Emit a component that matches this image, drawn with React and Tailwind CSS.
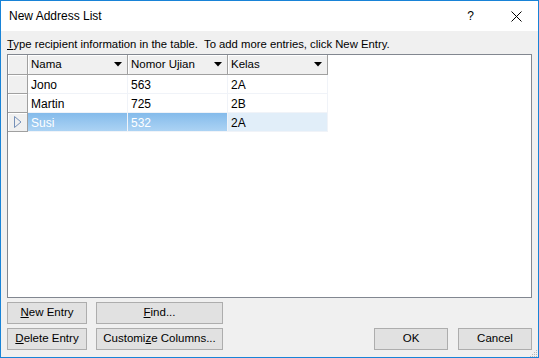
import React from 'react';

const font = { fontFamily: '"Segoe UI", "Liberation Sans", sans-serif' };

const columns = ['Nama', 'Nomor Ujian', 'Kelas'];

const rows = [
  ['Jono', '563', '2A'],
  ['Martin', '725', '2B'],
  ['Susi', '532', '2A'],
];

const DropArrow = () => (
  <svg width="8" height="5" viewBox="0 0 8 5" className="shrink-0">
    <path d="M0 0 H8 L4 4.5 Z" fill="#000" />
  </svg>
);

const Btn = ({ children, className }) => (
  <button
    className={`h-[22px] border border-[#adadad] bg-[#e1e1e1] text-[11.5px] text-black leading-none ${className}`}
  >
    {children}
  </button>
);

const HeaderCell = ({ label }) => (
  <div className="w-[100px] h-[20px] flex items-center justify-between pl-[3px] pr-[5px] bg-[#f0f0f0] border-r border-b border-[#a0a0a0] shadow-[inset_1px_1px_0_#ffffff] text-[11.5px]">
    <span>{label}</span>
    <DropArrow />
  </div>
);

export default function App() {
  return (
    <div
      className="w-[539px] h-[358px] border border-[#1883d7] flex flex-col text-black overflow-hidden"
      style={font}
    >
      {/* title bar */}
      <div className="h-[30px] bg-white flex items-center pl-[8px] shrink-0">
        <span className="text-[12px]">New Address List</span>
        <span className="ml-auto text-[12px] mr-[37px]">?</span>
        <svg width="11" height="11" viewBox="0 0 11 11" className="mr-[16px]">
          <path d="M0.5 0.5 L10.5 10.5 M10.5 0.5 L0.5 10.5" stroke="#000" strokeWidth="1" />
        </svg>
      </div>

      {/* body */}
      <div className="flex-1 bg-[#f0f0f0] px-[6px] pb-[8px] flex flex-col relative">
        <div className="h-[23px] flex items-end pb-[1px] text-[11.3px] whitespace-nowrap">
          <span><u>T</u>ype recipient information in the table.&nbsp; To add more entries, click New Entry.</span>
        </div>

        <div className="h-[244px] border border-[#828790] bg-white">
          <div className="flex">
            <div className="w-[20px] h-[20px] bg-[#f0f0f0] border-r border-b border-[#a0a0a0] shadow-[inset_1px_1px_0_#ffffff]" />
            {columns.map((c) => (
              <HeaderCell key={c} label={c} />
            ))}
          </div>
          {rows.map((r, i) => {
            const sel = i === 2;
            return (
              <div key={i} className="flex">
                <div className="w-[20px] h-[19px] bg-[#f0f0f0] border-r border-b border-[#a0a0a0] shadow-[inset_1px_1px_0_#ffffff] flex items-center justify-center">
                  {sel && (
                    <svg width="9" height="12" viewBox="0 0 9 12">
                      <path d="M1.5 0.5 V11.5 L8 6 Z" fill="none" stroke="#7590b8" strokeWidth="1" />
                    </svg>
                  )}
                </div>
                {r.map((v, j) => {
                  const blue = sel && j < 2;
                  const light = sel && j === 2;
                  return (
                    <div
                      key={j}
                      className={`w-[100px] h-[19px] flex items-center pl-[3px] pt-[1px] text-[12px] border-r border-b border-[#f0f3f8] ${
                        blue
                          ? 'bg-gradient-to-b from-[#84bbeb] to-[#acd3f4] text-white'
                          : light
                          ? 'bg-[#e1eef9]'
                          : 'bg-white'
                      }`}
                    >
                      {v}
                    </div>
                  );
                })}
              </div>
            );
          })}
        </div>

        <div className="mt-[4px] flex flex-col gap-[4px]">
          <div className="flex">
            <Btn className="w-[80px]"><u>N</u>ew Entry</Btn>
            <Btn className="w-[127px] ml-[9px]"><u>F</u>ind...</Btn>
          </div>
          <div className="flex">
            <Btn className="w-[80px]"><u>D</u>elete Entry</Btn>
            <Btn className="w-[127px] ml-[9px]">Customi<u>z</u>e Columns...</Btn>
            <Btn className="w-[74px] ml-auto">OK</Btn>
            <Btn className="w-[74px] ml-[10px]">Cancel</Btn>
          </div>
        </div>

        <svg width="10" height="10" viewBox="0 0 10 10" className="absolute right-0 bottom-0">
          <g fill="#b8b8b8">
            <rect x="8" y="2" width="1" height="1" />
            <rect x="6" y="4" width="1" height="1" />
            <rect x="8" y="4" width="1" height="1" />
            <rect x="4" y="6" width="1" height="1" />
            <rect x="6" y="6" width="1" height="1" />
            <rect x="8" y="6" width="1" height="1" />
            <rect x="2" y="8" width="1" height="1" />
            <rect x="4" y="8" width="1" height="1" />
            <rect x="6" y="8" width="1" height="1" />
            <rect x="8" y="8" width="1" height="1" />
          </g>
        </svg>
      </div>
    </div>
  );
}
